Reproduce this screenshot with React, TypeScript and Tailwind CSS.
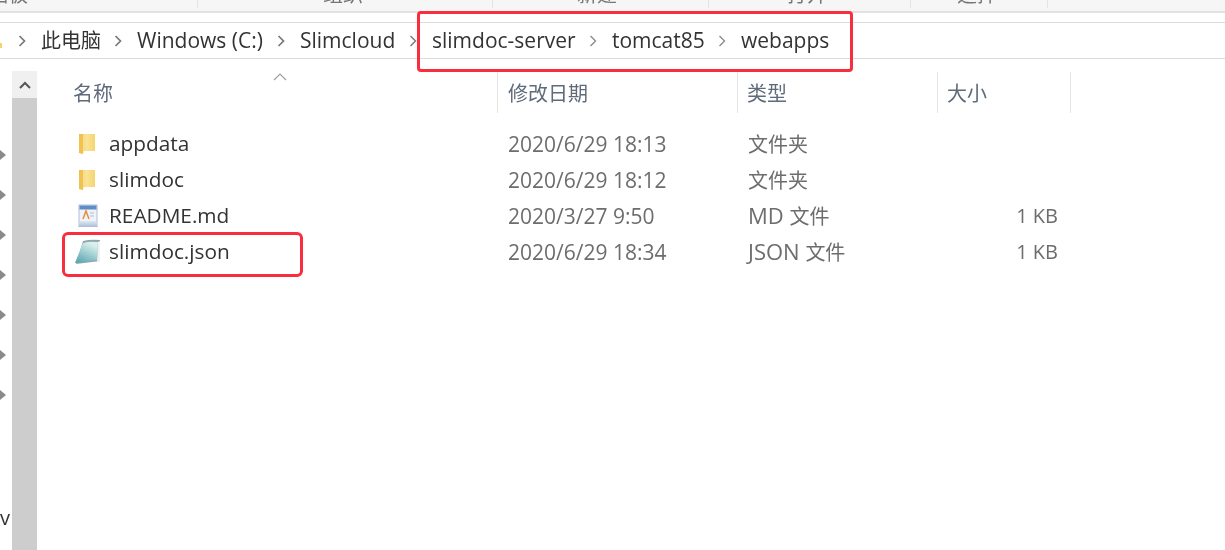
import type { ReactNode } from "react";

const FONT = "font-['Open_Sans','Noto_Sans_CJK_SC',sans-serif]";

const RIBBON = [
  { label: "剪贴板", width: "w-[198px]", text: "-ml-[32px]" },
  { label: "组织", width: "w-[295px]", text: "ml-[125px]" },
  { label: "新建", width: "w-[216px]", text: "ml-[84px]" },
  { label: "打开", width: "w-[202px]", text: "ml-[78px]" },
  { label: "选择", width: "w-[137px]", text: "ml-[46px]" },
];

const CRUMBS = [
  { label: "此电脑", width: "w-[96px]", size: "text-[20px]", stroke: "#777", weight: 1.7 },
  { label: "Windows (C:)", width: "w-[163px]", size: "text-[21px]", stroke: "#777", weight: 1.7 },
  { label: "Slimcloud", width: "w-[132px]", size: "text-[21px]", stroke: "#777", weight: 1.7 },
  { label: "slimdoc-server", width: "w-[180px]", size: "text-[21px]", stroke: "#777", weight: 1.4 },
  { label: "tomcat85", width: "w-[129px]", size: "text-[21px]", stroke: "#888", weight: 1.3 },
  { label: "webapps", width: "", size: "text-[21px]", stroke: "#888", weight: 1.3 },
];

const COLUMNS = [
  { label: "名称", width: "w-[426px]", pad: "pl-[1px]" },
  { label: "修改日期", width: "w-[240px]", pad: "pl-[10px]" },
  { label: "类型", width: "w-[200px]", pad: "pl-[9px]" },
  { label: "大小", width: "w-[133px]", pad: "pl-[9px]" },
];

const FILES = [
  { name: "appdata", icon: "folder", date: "2020/6/29 18:13", prefix: "", type: "文件夹", size: "" },
  { name: "slimdoc", icon: "folder", date: "2020/6/29 18:12", prefix: "", type: "文件夹", size: "" },
  { name: "README.md", icon: "readme", date: "2020/3/27 9:50", prefix: "MD ", type: "文件", size: "1 KB" },
  { name: "slimdoc.json", icon: "notepad", date: "2020/6/29 18:34", prefix: "JSON ", type: "文件", size: "1 KB" },
];

function FolderIcon({ id }: { id: string }) {
  return (
    <svg width="18" height="22" viewBox="0 0 18 22" className="ml-[6px]">
      <defs>
        <linearGradient id={id} x1="0" x2="1" y1="0" y2="0">
          <stop offset="0" stopColor="#fdf0bb" />
          <stop offset="1" stopColor="#f6d56f" />
        </linearGradient>
      </defs>
      <path d="M1 1h16v17H6l-1 3-4-1z" fill={`url(#${id})`} />
      <path d="M1 1h4v17l0 3-4-1z" fill="#f0c24f" />
      <path d="M5 1h3v17H5z" fill="#f8df8f" />
    </svg>
  );
}

function ReadmeIcon() {
  return (
    <svg width="22" height="25" viewBox="0 0 22 25" className="ml-[5px]">
      <defs>
        <linearGradient id="readmeBase" x1="0" x2="0" y1="0" y2="1">
          <stop offset="0" stopColor="#dfe8f5" />
          <stop offset="1" stopColor="#a9bcd8" />
        </linearGradient>
      </defs>
      <rect x="2" y="1" width="18" height="20" fill="#eef3fa" stroke="#9db0cc" strokeWidth="0.8" />
      <rect x="2.5" y="1.5" width="17" height="4" fill="#5d8cc7" />
      <path d="M6 15l3-8 3 8" fill="none" stroke="#e48f3c" strokeWidth="1.5" />
      <path d="M13 9h4M13 12h4" stroke="#aebed6" />
      <path d="M3 17h16l2 6H1z" fill="url(#readmeBase)" />
    </svg>
  );
}

function NotepadIcon() {
  return (
    <svg width="28" height="26" viewBox="0 0 28 26" className="ml-[2px]">
      <defs>
        <linearGradient id="notepadFace" x1="0" x2="0.5" y1="1" y2="0">
          <stop offset="0" stopColor="#4f9fae" />
          <stop offset="1" stopColor="#d9f0ec" />
        </linearGradient>
      </defs>
      <path d="M9 2Q17 0 26 1v21l-24 3z" fill="#8fa6ae" />
      <path d="M9 4Q16 2 24 3l-1 18-22 3Q5 14 9 4z" fill="url(#notepadFace)" />
      <path d="M24 3l2-1v20l-3 1z" fill="#eef2f2" />
    </svg>
  );
}

function FileIcon({ kind, id }: { kind: string; id: string }): ReactNode {
  if (kind === "folder") return <FolderIcon id={id} />;
  if (kind === "readme") return <ReadmeIcon />;
  return <NotepadIcon />;
}

function Chevron({ stroke, weight }: { stroke: string; weight: number }) {
  return (
    <svg width="10" height="14" viewBox="0 0 10 14" className="shrink-0">
      <path d="M2.5 2l5 5-5 5" fill="none" stroke={stroke} strokeWidth={weight} />
    </svg>
  );
}

export default function App() {
  return (
    <div className={`relative flex h-[550px] w-[1225px] flex-col overflow-hidden bg-white text-[#333] blur-[0.3px] ${FONT}`}>
      {/* clipped ribbon labels */}
      <div className="flex h-[11px] shrink-0 overflow-hidden bg-[#f6f6f6]">
        {RIBBON.map((r) => (
          <div key={r.label} className={`${r.width} h-[8px] overflow-hidden border-r border-[#e4e4e4]`}>
            <div className={`${r.text} -mt-[15px] whitespace-nowrap text-[20px] leading-[20px] text-[#777]`}>{r.label}</div>
          </div>
        ))}
      </div>
      <div className="h-[11px] shrink-0 border-t-2 border-[#e2e2e2] bg-white" />

      {/* address bar */}
      <div className="flex h-[37px] shrink-0 items-center border-y border-[#dcdcdc] pl-[17px]">
        <div className="absolute left-0 top-[43px] h-[5px] w-[2px] bg-[#f4d36c]" />
        {CRUMBS.map((c) => (
          <div key={c.label} className={`flex items-center ${c.width}`}>
            <Chevron stroke={c.stroke} weight={c.weight} />
            <span className={`ml-[14px] whitespace-nowrap leading-none ${c.size}`}>{c.label}</span>
          </div>
        ))}
      </div>

      <div className="flex min-h-0 flex-1">
        {/* nav tree edge */}
        <div className="flex w-[12px] shrink-0 flex-col gap-[30px] pt-[91px]">
          {[0, 1, 2, 3, 4, 5, 6].map((i) => (
            <div key={i} className="h-0 w-0 border-y-[5px] border-l-[6px] border-y-transparent border-l-[#8a8a8a]" />
          ))}
        </div>

        {/* scrollbar */}
        <div className="mt-[12px] w-[25px] shrink-0 bg-[#cdcdcd]">
          <div className="flex h-[27px] items-center justify-center bg-[#f0f0f0]">
            <svg width="14" height="10" viewBox="0 0 14 10">
              <path d="M2 8l5-5 5 5" fill="none" stroke="#555" strokeWidth="2" />
            </svg>
          </div>
        </div>

        {/* list */}
        <div className="ml-[35px] min-w-0 flex-1">
          <div className="relative mt-[13px] flex h-[41px] items-center text-[20px] text-[#5f6b7a]">
            <svg width="14" height="8" viewBox="0 0 14 8" className="absolute left-[201px] top-[1px]">
              <path d="M1 7l6-6 6 6" fill="none" stroke="#a0a0a0" strokeWidth="1.2" />
            </svg>
            {COLUMNS.map((c) => (
              <div key={c.label} className={`${c.width} ${c.pad} flex h-full items-center border-r border-[#e5e5e5] pt-[2px]`}>
                {c.label}
              </div>
            ))}
          </div>
          <div className="pt-[13px]">
            {FILES.map((f, i) => (
              <div key={f.name} className="flex h-[36px] items-center text-[20px]">
                <div className="flex w-[436px] items-center">
                  <div className="flex w-[37px] justify-start">
                    <FileIcon kind={f.icon} id={`folderFace${i}`} />
                  </div>
                  <span className="text-[20.8px] text-[#333]">{f.name}</span>
                </div>
                <div className="w-[240px] pt-[2px] text-[21px] text-[#6d6d6d]">{f.date}</div>
                <div className="-mt-[2px] w-[199px] text-[#6d6d6d]">
                  <span className="whitespace-pre text-[22px]">{f.prefix}</span>
                  {f.type}
                </div>
                <div className="w-[111px] text-right text-[#6d6d6d]">{f.size}</div>
              </div>
            ))}
          </div>
        </div>
      </div>

      {/* clipped letter at the left edge */}
      <div className="absolute left-0 top-[508px] text-[20px] leading-none text-[#333]">v</div>

      {/* red annotations */}
      <div className="absolute left-[417px] top-[11px] h-[61px] w-[436px] rounded-[4px] border-[3px] border-[#f92d3d]" />
      <div className="absolute left-[62px] top-[232px] h-[45px] w-[241px] rounded-[6px] border-[3px] border-[#f92d3d]" />
    </div>
  );
}
